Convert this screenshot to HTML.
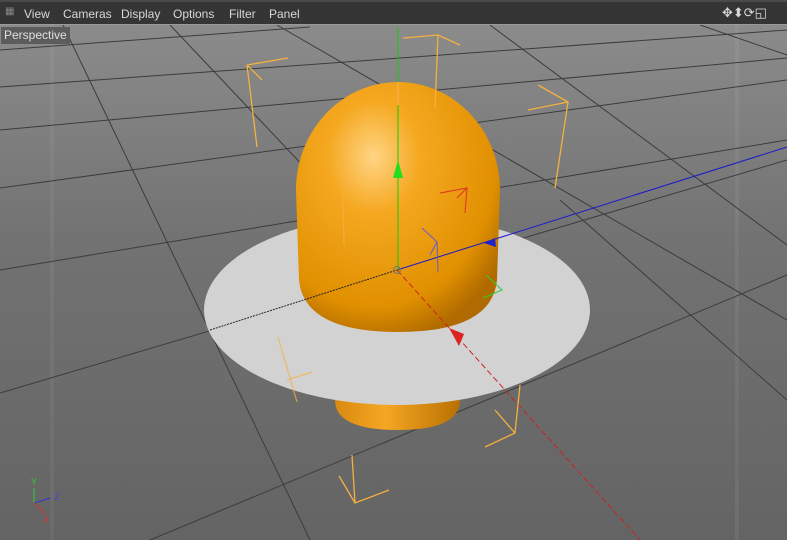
<!DOCTYPE html>
<html><head><style>
body{margin:0;width:787px;height:540px;overflow:hidden;background:#6f6f6f;font-family:"Liberation Sans",sans-serif}
.bar{position:absolute;left:0;top:0;width:787px;height:25px;background:#353535;border-top:2px solid #4a4a4a;box-sizing:border-box;border-bottom:1px solid #9a9a9a}
.bar span{position:absolute;top:5px;color:#d8d8d8;font-size:12px}
.pers{position:absolute;left:1px;top:27px;background:#5c5c5c;color:#e0e0e0;font-size:12px;padding:0 3px;height:17px;line-height:17px}
</style></head><body>
<svg width="787" height="540" style="position:absolute;left:0;top:0">
<defs>
<linearGradient id="bg" x1="0" y1="0" x2="0" y2="1"><stop offset="0" stop-color="#8e8e8e"/><stop offset="0.45" stop-color="#727272"/><stop offset="1" stop-color="#646464"/></linearGradient>
<radialGradient id="org" cx="0.38" cy="0.3" r="0.75"><stop offset="0" stop-color="#ffd585"/><stop offset="0.3" stop-color="#f5a820"/><stop offset="0.8" stop-color="#e09000"/><stop offset="1" stop-color="#b06a00"/></radialGradient>
<linearGradient id="orgb" x1="0" y1="0" x2="1" y2="0"><stop offset="0" stop-color="#d88a10"/><stop offset="0.4" stop-color="#f5a623"/><stop offset="1" stop-color="#b87000"/></linearGradient>
</defs>
<rect width="787" height="540" fill="url(#bg)"/>
<rect x="50" y="25" width="4" height="515" fill="#fff" opacity="0.05"/>
<rect x="735" y="25" width="4" height="515" fill="#fff" opacity="0.06"/>
<g stroke="#3c3c3c" stroke-width="1" fill="none">
<line x1="0" y1="50" x2="310" y2="27"/>
<line x1="0" y1="87" x2="787" y2="30"/>
<line x1="0" y1="130" x2="787" y2="58"/>
<line x1="0" y1="188" x2="787" y2="80"/>
<line x1="0" y1="270" x2="787" y2="140"/>
<line x1="0" y1="393" x2="787" y2="160"/>
<line x1="150" y1="540" x2="787" y2="275"/>
<line x1="63" y1="25" x2="310" y2="540"/>
<line x1="170" y1="25" x2="430" y2="300"/>
<line x1="277" y1="25" x2="787" y2="320"/>
<line x1="490" y1="25" x2="787" y2="245"/>
<line x1="700" y1="25" x2="787" y2="55"/>
<line x1="560" y1="200" x2="787" y2="400"/>
</g>
<path d="M335 400 L460 400 Q460 430 398 430 Q335 430 335 400Z" fill="url(#orgb)"/>
<ellipse cx="397" cy="310" rx="193" ry="95" fill="#d2d2d2"/>
<path d="M296 190 A102 108 0 0 1 500 190 L497 280 Q492 332 398 332 Q304 332 299 280Z" fill="url(#org)"/>
<line x1="210" y1="330" x2="397" y2="270" stroke="#222" stroke-width="1" stroke-dasharray="2 1"/>
<line x1="397" y1="270" x2="787" y2="147" stroke="#1a1acc" stroke-width="1"/>
<path d="M484 243 L495 238 L496 247Z" fill="#22c"/>
<line x1="398" y1="27" x2="398" y2="270" stroke="#1c1" stroke-width="1"/>
<path d="M393 178 L398 160 L403 178Z" fill="#2d2"/>
<line x1="398" y1="82" x2="398" y2="105" stroke="#f5b040" stroke-width="1.5"/>
<line x1="397" y1="270" x2="640" y2="540" stroke="#c22" stroke-width="1" stroke-dasharray="6 3"/>
<path d="M449 328 L464 334 L459 346Z" fill="#d22"/>
<circle cx="397" cy="270" r="3.5" fill="none" stroke="#777"/>
<g stroke="#f5b040" stroke-width="1.3" fill="none">
<path d="M403 38 L438 35 L460 45 M438 35 L435 108"/>
<path d="M247 65 L288 58 M247 65 L257 147 M247 65 L262 80"/>
<path d="M538 85 L568 102 L555 188 M528 110 L568 102"/>
<path d="M330 140 L342 155 L344 245" opacity="0.7"/>
<path d="M278 337 L297 402 M287 380 L312 372" opacity="0.7"/>
<path d="M520 385 L515 433 L485 447 M495 410 L515 433"/>
<path d="M352 455 L355 503 L389 490 M339 476 L355 503"/>
</g>
<path d="M440 193 L467 188 L465 213 M467 188 L457 198" stroke="#e03020" fill="none"/>
<path d="M422 228 L437 242 L438 272 M437 242 L430 255" stroke="#6a5ad0" fill="none"/>
<path d="M486 275 L502 290 L483 298" stroke="#3c3" fill="none"/>
<g font-size="9"><line x1="34" y1="488" x2="34" y2="503" stroke="#3c3"/><line x1="34" y1="503" x2="50" y2="498" stroke="#33c"/><line x1="34" y1="503" x2="45" y2="514" stroke="#c33"/>
<text x="31" y="485" fill="#3c3">Y</text><text x="54" y="500" fill="#44d">Z</text><text x="43" y="523" fill="#d33">X</text></g>
</svg>
<div class="bar">
<span style="left:5px;top:4px;color:#888;font-size:10px">▦</span>
<span style="left:24px">View</span><span style="left:63px">Cameras</span><span style="left:121px">Display</span><span style="left:173px">Options</span><span style="left:229px">Filter</span><span style="left:269px">Panel</span>
<span style="left:722px;font-size:13px;top:3px">✥⬍⟳◱</span>
</div>
<div class="pers">Perspective</div>
</body></html>
